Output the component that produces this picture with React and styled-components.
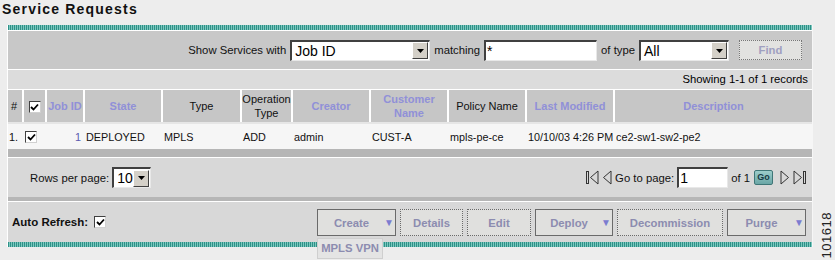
import styled, { createGlobalStyle } from "styled-components";

const GlobalStyle = createGlobalStyle`
  body {
    margin: 0;
    background: #ededed;
    font-family: "Liberation Sans", Arial, sans-serif;
    font-size: 11.3px;
    color: #000;
  }
`;

const columns = [
  { w: 15, label: "#", align: "left" },
  { w: 23, label: "check" },
  { w: 38, label: "Job ID", link: true },
  { w: 78, label: "State", link: true },
  { w: 79, label: "Type" },
  { w: 51, label: "Operation Type" },
  { w: 78, label: "Creator", link: true },
  { w: 78, label: "Customer Name", link: true },
  { w: 78, label: "Policy Name" },
  { w: 88, label: "Last Modified", link: true },
  { w: 198, label: "Description", link: true },
];

const row = ["1.", "check", "1", "DEPLOYED", "MPLS", "ADD", "admin", "CUST-A", "mpls-pe-ce", "10/10/03 4:26 PM", "ce2-sw1-sw2-pe2"];

function Check() {
  return (
    <CheckBox>
      <svg width="9" height="9" viewBox="0 0 9 9">
        <path d="M1 4 L3.5 6.5 L8 1.5" stroke="#000" strokeWidth="1.8" fill="none" />
      </svg>
    </CheckBox>
  );
}

function Select({ value, width }) {
  return (
    <SelectBox $w={width}>
      <span>{value}</span>
      <DropBtn>
        <svg width="7" height="4" viewBox="0 0 7 4">
          <path d="M0 0 H7 L3.5 4 Z" fill="#000" />
        </svg>
      </DropBtn>
    </SelectBox>
  );
}

function PageIcon({ dir, end }) {
  const left = dir === "left";
  return (
    <svg width={end ? 13 : 10} height="15" viewBox={end ? "0 0 13 15" : "0 0 10 15"}>
      {end && left && <rect x="0.5" y="1.5" width="2" height="12" fill="none" stroke="#333" />}
      {end && !left && <rect x="10.5" y="1.5" width="2" height="12" fill="none" stroke="#333" />}
      {left ? (
        <path d={end ? "M12 1 L4.5 7.5 L12 14 Z" : "M9 1 L1.5 7.5 L9 14 Z"} fill="none" stroke="#333" />
      ) : (
        <path d="M1 1 L8.5 7.5 L1 14 Z" fill="none" stroke="#333" />
      )}
    </svg>
  );
}

export default function App() {
  return (
    <Page>
      <GlobalStyle />
      <Title>Service Requests</Title>
      <Panel>
        <Stripe />
        <Toolbar>
          <Label>Show Services with</Label>
          <Select value="Job ID" width={140} />
          <Label>matching</Label>
          <TextInput $w={113}>*</TextInput>
          <Label>of type</Label>
          <Select value="All" width={90} />
          <FindButton>Find</FindButton>
        </Toolbar>
        <Summary>Showing 1-1 of 1 records</Summary>
        <Table>
          <colgroup>
            {columns.map((c, i) => (
              <col key={i} style={{ width: c.w }} />
            ))}
          </colgroup>
          <thead>
            <tr>
              {columns.map((c, i) => (
                <Th key={i} $link={c.link} $align={c.align}>
                  {c.label === "check" ? <Check /> : c.label}
                </Th>
              ))}
            </tr>
          </thead>
          <tbody>
            <tr>
              {row.map((v, i) => (
                <Td key={i} $num={i === 2} $first={i === 0}>
                  {v === "check" ? <Check /> : v}
                </Td>
              ))}
            </tr>
          </tbody>
        </Table>
        <Divider $h={8} />
        <Pager>
          <PagerGroup>
            <Label>Rows per page:</Label>
            <Select value="10" width={39} />
          </PagerGroup>
          <PagerGroup>
            <PageIcon dir="left" end />
            <PageIcon dir="left" />
            <Label>Go to page:</Label>
            <TextInput $w={51}>1</TextInput>
            <Label>of 1</Label>
            <GoButton>Go</GoButton>
            <PageIcon dir="right" />
            <PageIcon dir="right" end />
          </PagerGroup>
        </Pager>
        <Divider $h={4} />
        <Actions>
          <Refresh>
            Auto Refresh: <Check />
          </Refresh>
          <Buttons>
            <MenuWrap>
              <ActionButton $w={79} $drop>
                Create
                <Arrow>▼</Arrow>
              </ActionButton>
              <MenuItem>MPLS VPN</MenuItem>
            </MenuWrap>
            <ActionButton $w={63} $dotted>Details</ActionButton>
            <ActionButton $w={64} $dotted>Edit</ActionButton>
            <ActionButton $w={78} $drop>
              Deploy
              <Arrow>▼</Arrow>
            </ActionButton>
            <ActionButton $w={106} $dotted>Decommission</ActionButton>
            <ActionButton $w={79} $drop>
              Purge
              <Arrow>▼</Arrow>
            </ActionButton>
          </Buttons>
        </Actions>
        <Stripe />
      </Panel>
      <FigureId>101618</FigureId>
    </Page>
  );
}

const Page = styled.div`
  position: relative;
  height: 260px;
  overflow: hidden;
`;

const Title = styled.div`
  height: 25px;
  padding-left: 2px;
  font-size: 14px;
  line-height: 19px;
  font-weight: bold;
  letter-spacing: 1.2px;
  color: #111;
`;

const Panel = styled.div`
  margin-left: 7px;
  width: 804px;
  border-left: 1px solid #fff;
  border-right: 1px solid #f6f6f6;
`;

const Stripe = styled.div`
  height: 5px;
  background: repeating-linear-gradient(90deg, #2e9187 0 1px, #7cc7bf 1px 2px);
`;

const Toolbar = styled.div`
  height: 38px;
  display: flex;
  align-items: center;
  justify-content: flex-end;
  gap: 4px;
  padding-right: 10px;
  background: #c8c8c8;
  border-top: 1px solid #fff;
  border-bottom: 1px solid #fff;
`;

const Label = styled.span`
  white-space: nowrap;
  color: #111;
`;

const SelectBox = styled.div`
  box-sizing: border-box;
  width: ${(p) => p.$w}px;
  height: 21px;
  display: flex;
  align-items: center;
  justify-content: space-between;
  background: #fff;
  border-top: 2px solid #404040;
  border-left: 2px solid #404040;
  border-bottom: 1px solid #e8e8e8;
  border-right: 1px solid #e8e8e8;
  padding-left: 3px;
  font-size: 14px;
  color: #000;
`;

const DropBtn = styled.div`
  box-sizing: border-box;
  width: 16px;
  height: 17px;
  margin-right: 1px;
  display: flex;
  align-items: center;
  justify-content: center;
  background: #d4d0c8;
  border-top: 1px solid #fff;
  border-left: 1px solid #fff;
  border-right: 1px solid #404040;
  border-bottom: 1px solid #404040;
`;

const TextInput = styled.div`
  box-sizing: border-box;
  width: ${(p) => p.$w}px;
  height: 21px;
  background: #fff;
  border-top: 2px solid #404040;
  border-left: 2px solid #404040;
  border-bottom: 1px solid #e8e8e8;
  border-right: 1px solid #e8e8e8;
  padding-left: 1px;
  font-size: 14px;
  line-height: 18px;
`;

const FindButton = styled.div`
  box-sizing: border-box;
  width: 63px;
  height: 20px;
  margin-left: 6px;
  display: flex;
  align-items: center;
  justify-content: center;
  background: #e2e2e0;
  border: 1px dotted #777;
  font-weight: bold;
  color: #a0a0c0;
`;

const Summary = styled.div`
  height: 19px;
  line-height: 19px;
  padding-right: 4px;
  text-align: right;
  background: #dcdcdc;
  border-bottom: 1px solid #fff;
`;

const Table = styled.table`
  width: 804px;
  table-layout: fixed;
  border-collapse: collapse;
  font-size: 10.8px;
`;

const Th = styled.th`
  height: 32px;
  padding: 0 ${(p) => (p.$align ? 3 : 0)}px;
  background: #c6c6c6;
  border-right: 2px solid #fff;
  border-bottom: 2px solid #e6e6e6;
  text-align: ${(p) => p.$align || "center"};
  line-height: 14px;
  font-size: 11px;
  font-weight: ${(p) => (p.$link ? "bold" : "normal")};
  color: ${(p) => (p.$link ? "#9090d8" : "#111")};
  &:last-child {
    border-right: none;
  }
`;

const Td = styled.td`
  height: 25px;
  padding: 0 ${(p) => (p.$num ? 3 : 1)}px 0 ${(p) => (p.$first ? 1 : 2)}px;
  background: #f6f6f6;
  white-space: nowrap;
  overflow: hidden;
  text-align: ${(p) => (p.$num ? "right" : "left")};
  color: ${(p) => (p.$num ? "#5a5ab0" : "#111")};
`;

const CheckBox = styled.span`
  box-sizing: border-box;
  display: inline-flex;
  align-items: center;
  justify-content: center;
  width: 12px;
  height: 12px;
  vertical-align: middle;
  background: #fff;
  border-top: 1px solid #404040;
  border-left: 1px solid #404040;
  border-right: 1px solid #d0d0d0;
  border-bottom: 1px solid #d0d0d0;
`;

const Divider = styled.div`
  height: ${(p) => p.$h}px;
  background: #b6b6b6;
  border-bottom: 1px solid #fff;
`;

const Pager = styled.div`
  height: 39px;
  display: flex;
  align-items: center;
  justify-content: space-between;
  padding: 0 6px 0 22px;
  background: #d8d8d8;
`;

const PagerGroup = styled.div`
  display: flex;
  align-items: center;
  gap: 3px;
`;

const GoButton = styled.div`
  width: 17px;
  height: 13px;
  margin: 0 4px 0 1px;
  display: flex;
  align-items: center;
  justify-content: center;
  border-radius: 2px;
  background: linear-gradient(#9cccca, #6aa6a6);
  border: 1px solid #3f7677;
  font-size: 9px;
  line-height: 9px;
  font-weight: bold;
  color: #173a44;
`;

const Actions = styled.div`
  height: 40px;
  display: flex;
  align-items: center;
  justify-content: space-between;
  padding: 0 6px 0 4px;
  background: #d8d8d8;
`;

const Refresh = styled.div`
  display: flex;
  align-items: center;
  gap: 6px;
  font-size: 11.5px;
  font-weight: bold;
  color: #111;
`;

const Buttons = styled.div`
  display: flex;
  align-items: center;
  gap: 4px;
  margin-top: 1px;
`;

const MenuWrap = styled.div`
  position: relative;
`;

const ActionButton = styled.div`
  box-sizing: border-box;
  position: relative;
  width: ${(p) => p.$w}px;
  height: 27px;
  display: flex;
  align-items: center;
  justify-content: center;
  padding-right: ${(p) => (p.$drop ? 10 : 0)}px;
  background: #e0e0de;
  border: 1px ${(p) => (p.$dotted ? "dotted" : "solid")} #6a6a6a;
  font-weight: bold;
  color: #8c8cb0;
`;

const Arrow = styled.span`
  position: absolute;
  right: 1px;
  top: 7px;
  font-size: 10px;
  color: #7c7cd0;
`;

const MenuItem = styled.div`
  position: absolute;
  left: 0;
  top: 29px;
  width: 66px;
  height: 21px;
  line-height: 19px;
  text-align: center;
  box-sizing: border-box;
  background: #e4e4e4;
  border: 1px solid #cfcfcf;
  font-weight: bold;
  color: #8c8cb0;
`;

const FigureId = styled.div`
  position: absolute;
  right: 1px;
  bottom: 2px;
  writing-mode: vertical-rl;
  transform: rotate(180deg);
  font-size: 13px;
  letter-spacing: 0.5px;
  color: #222;
`;
